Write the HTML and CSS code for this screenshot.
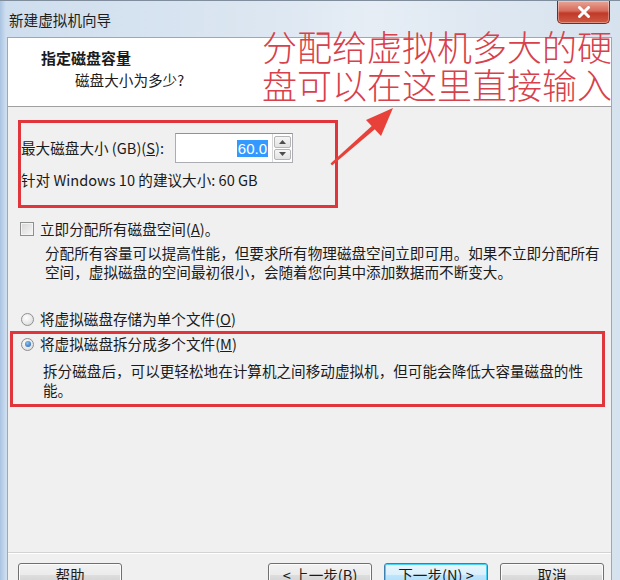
FILE: index.html
```html
<!DOCTYPE html>
<html lang="zh-CN">
<head>
<meta charset="utf-8">
<title>新建虚拟机向导</title>
<link rel="stylesheet" href="styles.css">
</head>
<body>
<div class="window">
  <div class="titlebar">
    <span class="title">新建虚拟机向导</span>
    <span class="close"><svg width="14" height="12" viewBox="0 0 14 12"><path d="M2.5 1.5 L11.5 10.5 M11.5 1.5 L2.5 10.5" stroke="#fff" stroke-width="3" stroke-linecap="round"/></svg></span>
  </div>
  <div class="client">
    <div class="header">
      <div class="h-title">指定磁盘容量</div>
      <div class="h-sub">磁盘大小为多少?</div>
    </div>
    <div class="body">
      <div class="mark size-box">
        <div class="size-row">
          <span class="lbl">最大磁盘大小 (GB)(<u>S</u>):</span>
          <div class="spin">
            <div class="spin-field"><span class="sel">60.0</span></div>
            <div class="spin-btns">
              <span class="sb"><svg width="7" height="4" viewBox="0 0 7 4"><path d="M0 4 L3.5 0 L7 4Z" fill="#4d4d4d"/></svg></span>
              <span class="sb"><svg width="7" height="4" viewBox="0 0 7 4"><path d="M0 0 L3.5 4 L7 0Z" fill="#4d4d4d"/></svg></span>
            </div>
          </div>
        </div>
        <div class="hint">针对 Windows 10 的建议大小: 60 GB</div>
      </div>
      <div class="opt check-row"><span class="checkbox"></span><span>立即分配所有磁盘空间(<u>A</u>)。</span></div>
      <p class="desc desc-a">分配所有容量可以提高性能，但要求所有物理磁盘空间立即可用。如果不立即分配所有<br>空间，虚拟磁盘的空间最初很小，会随着您向其中添加数据而不断变大。</p>
      <div class="opt radio-row r1"><span class="radio"></span><span>将虚拟磁盘存储为单个文件(<u>O</u>)</span></div>
      <div class="mark split-box">
        <div class="opt radio-row r2"><span class="radio checked"></span><span>将虚拟磁盘拆分成多个文件(<u>M</u>)</span></div>
        <p class="desc desc-b">拆分磁盘后，可以更轻松地在计算机之间移动虚拟机，但可能会降低大容量磁盘的性<br>能。</p>
      </div>
    </div>
    <div class="footer">
      <button class="btn">帮助</button>
      <button class="btn back">&lt; 上一步(<u>B</u>)</button>
      <button class="btn primary">下一步(<u>N</u>) &gt;</button>
      <button class="btn">取消</button>
    </div>
  </div>
  <div class="note">分配给虚拟机多大的硬<br>盘可以在这里直接输入</div>
  <svg class="arrow" width="620" height="580" viewBox="0 0 620 580">
    <polygon points="330.5,162.5 332,164.5 377.5,126 374.5,122.5" fill="#e8413a"/>
    <polygon points="393,107 366,119 381,135" fill="#e8413a"/>
  </svg>
</div>
</body>
</html>
```

FILE: styles.css
```css
* { box-sizing: border-box; }

html, body {
  margin: 0;
  padding: 0;
}

body {
  width: 620px;
  height: 580px;
  overflow: hidden;
  font-family: "Noto Sans CJK SC", "Noto Sans", sans-serif;
  font-size: 14.6px;
  color: #1b1b1b;
  background: #c9d9ea;
}

.window {
  position: relative;
  width: 620px;
  height: 580px;
  display: flex;
  flex-direction: column;
  background: linear-gradient(90deg, #a9c3e2 0px, #cfdeee 6px, #dbe6f1 40%, #e6edf5 60%, #d6e2ee 100%);
  border-top: 1px solid #7f8d9c;
}

.titlebar {
  height: 36px;
  flex: none;
  display: flex;
  align-items: flex-start;
  justify-content: space-between;
  padding-left: 9px;
}

.title {
  margin-top: 10px;
  font-size: 14.6px;
  line-height: 18px;
  color: #1e1e1e;
}

.close {
  width: 53px;
  height: 23px;
  margin-right: 10px;
  display: flex;
  align-items: center;
  justify-content: center;
  border: 1px solid #7a2a22;
  border-top: none;
  border-radius: 0 0 5px 5px;
  background: linear-gradient(180deg, #e8a597 0%, #d66b5b 45%, #c1392a 55%, #cf5a42 100%);
  box-shadow: inset 0 0 0 1px rgba(255,255,255,0.35);
}

.client {
  flex: 1;
  margin: 0 8px 0 7px;
  display: flex;
  flex-direction: column;
  background: #f0f0f0;
  border-left: 1px solid #98a9bb;
  border-right: 1px solid #98a9bb;
  border-top: 1px solid #98a9bb;
  overflow: hidden;
}

.header {
  height: 69px;
  flex: none;
  background: #fff;
  border-bottom: 1px solid #a0a0a0;
  padding: 10px 0 0 33px;
}

.h-title {
  width: fit-content;
  font-weight: bold;
  font-size: 15px;
  line-height: 20px;
}

.h-sub {
  width: fit-content;
  margin-top: 2px;
  margin-left: 34px;
  line-height: 20px;
}

.body {
  flex: 1;
  padding-top: 13px;
}

.mark {
  border: 3px solid #e0363b;
}

.size-box {
  margin-left: 10px;
  width: 320px;
  height: 88px;
}

.size-row {
  margin-top: 10px;
  display: flex;
  align-items: center;
}

.lbl {
  width: 154px;
  line-height: 18px;
}

.spin {
  display: flex;
  height: 30px;
  border: 1px solid #abadb3;
  border-top-color: #8f9399;
  background: #fff;
}

.spin-field {
  width: 96px;
  display: flex;
  align-items: center;
  justify-content: flex-end;
  padding-right: 4px;
}

.sel {
  background: #3399ff;
  color: #fff;
  font-family: "Liberation Sans", "Noto Sans", sans-serif;
  font-size: 15px;
  line-height: 17px;
  padding: 0 1px;
}

.spin-btns {
  width: 20px;
  display: flex;
  flex-direction: column;
  border-left: 1px solid #d6d6d6;
  padding: 2px 1px;
  gap: 1px;
}

.sb {
  flex: 1;
  display: flex;
  align-items: center;
  justify-content: center;
  border: 1px solid #b5b5b5;
  border-radius: 2px;
  background: linear-gradient(180deg, #f6f6f6, #e2e2e2);
}

.hint {
  margin-top: 8px;
  line-height: 18px;
}

.opt {
  display: flex;
  align-items: center;
  line-height: 18px;
}

.check-row {
  margin-top: 12px;
  padding-left: 12px;
}

.checkbox {
  width: 14px;
  height: 14px;
  margin-right: 6px;
  border: 1px solid #8e8f8f;
  background: linear-gradient(135deg, #d6d6d6, #f7f7f7);
  box-shadow: inset 0 0 0 1px #f4f4f4;
}

.desc {
  margin: 0;
}

.desc-a {
  margin-top: 5px;
  padding-left: 37px;
  line-height: 19px;
}

.radio {
  width: 13px;
  height: 13px;
  border-radius: 50%;
  border: 1px solid #8e8f8f;
  background: radial-gradient(circle at 40% 35%, #ffffff 0%, #e6e6e6 60%, #d0d0d0 100%);
  margin-right: 6px;
  display: flex;
  align-items: center;
  justify-content: center;
}

.radio.checked::after {
  content: "";
  width: 6px;
  height: 6px;
  border-radius: 50%;
  background: radial-gradient(circle at 40% 35%, #8fc1ee, #1b5ea8);
}

.r1 {
  margin-top: 29px;
  padding-left: 13px;
}

.split-box {
  margin-top: 3px;
  margin-left: 2px;
  width: 595px;
  height: 76px;
  padding-left: 8px;
}

.r2 {
  margin-top: 1px;
}

.desc-b {
  margin-top: 8px;
  padding-left: 22px;
  line-height: 19px;
}

.footer {
  flex: none;
  height: 28px;
  border-top: 1px solid #d3d3d3;
  box-shadow: inset 0 1px 0 #ffffff;
  display: flex;
  align-items: flex-start;
  gap: 12px;
  padding: 10px 7px 0 10px;
}

.btn {
  width: 104px;
  height: 24px;
  flex: none;
  font-family: inherit;
  font-size: 14.6px;
  color: #1b1b1b;
  border: 1px solid #707070;
  border-radius: 3px;
  background: linear-gradient(180deg, #f2f2f2 0%, #ebebeb 50%, #dddddd 51%, #cfcfcf 100%);
  box-shadow: inset 0 0 0 1px #fcfcfc;
  padding: 0;
  line-height: 22px;
}

.back {
  margin-left: auto;
}

.primary {
  border-color: #3c7fb1;
  box-shadow: inset 0 0 0 1px #48d2f8;
  background: linear-gradient(180deg, #eaf6fd 0%, #d9f0fc 50%, #bee6fd 51%, #a7d9f5 100%);
}

.note {
  position: absolute;
  left: 262px;
  top: 26px;
  font-family: "Noto Sans CJK SC", sans-serif;
  font-weight: 300;
  font-size: 35px;
  line-height: 38px;
  color: #d7414b;
  white-space: nowrap;
}

.arrow {
  position: absolute;
  left: 0;
  top: 0;
  pointer-events: none;
}
```
